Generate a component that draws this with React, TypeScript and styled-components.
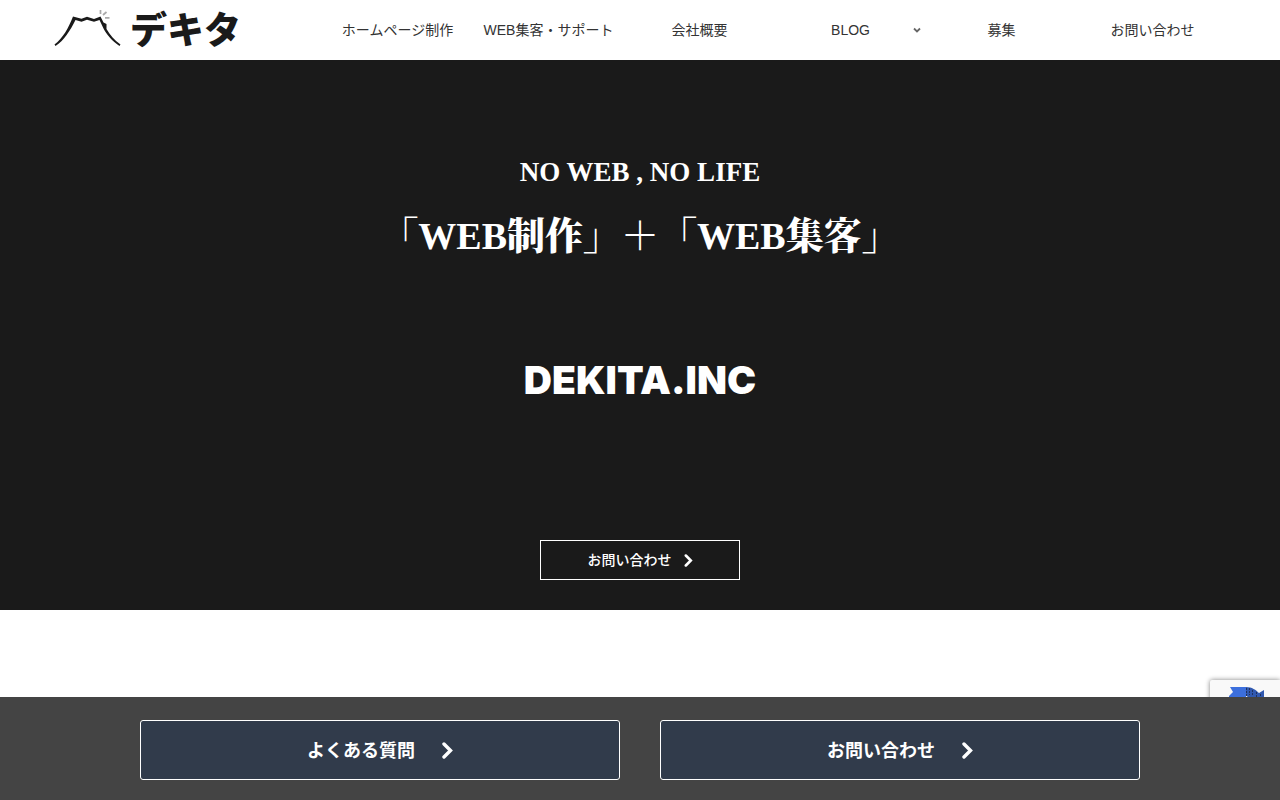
import React from "react";
import styled, { createGlobalStyle } from "styled-components";

const GlobalStyle = createGlobalStyle`
  *, *::before, *::after { box-sizing: border-box; }
  body {
    margin: 0;
    background: #fff;
    color: #333;
    font-family: "Liberation Sans", "Noto Sans CJK JP", sans-serif;
    font-size: 14px;
    line-height: 20px;
  }
  a { color: inherit; text-decoration: none; }
`;

const Page = styled.div`
  min-height: 100vh;
  padding-bottom: 104px;
`;

const Header = styled.header`
  display: grid;
  grid-template-columns: 270px 1fr;
  align-items: center;
  height: 60px;
  padding: 0 52px;
  background: #fff;
`;

const Brand = styled.a`
  display: flex;
  align-items: center;
  gap: 8px;
  color: #1a1a1a;
`;

const BrandName = styled.span`
  padding-bottom: 4px;
  font-family: "Noto Sans CJK JP", sans-serif;
  font-size: 37px;
  font-style: oblique 8deg;
  font-weight: 900;
  line-height: 56px;
`;

const Nav = styled.nav`
  display: grid;
  grid-template-columns: repeat(6, 1fr);
`;

const NavLink = styled.a`
  display: grid;
  grid-template-columns: 1fr auto 1fr;
  align-items: center;
  line-height: 60px;
  white-space: nowrap;

  svg { justify-self: end; margin-right: 5px; }
`;

const NavLabel = styled.span`
  grid-column: 2;
`;

const Hero = styled.section`
  display: flex;
  flex-direction: column;
  align-items: center;
  padding: 92px 20px 30px;
  background: #1a1a1a;
  color: #fff;
  text-align: center;
`;

const Tagline = styled.p`
  margin: 0;
  font: bold 27px/40px "Liberation Serif", serif;
`;

const Title = styled.h1`
  margin: 16px 0 0;
  font: 900 38px/56px "Liberation Serif", "Noto Serif CJK JP", "Noto Sans CJK JP", serif;
`;

const Company = styled.p`
  margin: 84px 0 0;
  font: 900 39px/64px Inter, sans-serif;
`;

const OutlineButton = styled.a`
  display: flex;
  align-items: center;
  justify-content: center;
  gap: 12px;
  width: 200px;
  height: 40px;
  margin-top: 128px;
  border: 1px solid #fff;
  font-family: "Noto Sans CJK JP", sans-serif;
  font-weight: 500;
`;

const ButtonLabel = styled.span`
  padding-bottom: 2px;
`;

const BottomBar = styled.div`
  position: fixed;
  right: 0;
  bottom: 0;
  left: 0;
  z-index: 2;
  padding: 23px 20px 20px;
  background: #444;
`;

const BottomActions = styled.div`
  display: grid;
  grid-template-columns: 1fr 1fr;
  gap: 40px;
  max-width: 1000px;
  margin: 0 auto;
`;

const ActionButton = styled.a`
  display: flex;
  align-items: center;
  justify-content: center;
  gap: 27px;
  height: 60px;
  border: 1px solid #fff;
  border-radius: 3px;
  background: #313b4b;
  color: #fff;
  font-family: "Noto Sans CJK JP", sans-serif;
  font-size: 18px;
  font-weight: 700;
`;

const CaptchaBadge = styled.div`
  position: fixed;
  right: 0;
  bottom: 60px;
  z-index: 1;
  width: 70px;
  height: 60px;
  padding: 7px 0 0 19px;
  border-radius: 2px 0 0 2px;
  background: #f9f9f9;
  box-shadow: 0 0 5px gray;
`;

const Mountain = () => (
  <svg width="70" height="40" viewBox="0 0 70 40" aria-hidden="true">
    <path
      d="M2.500 34.500C11 28 16.500 18 21 6.500L29.500 8.700L35 6.800L42 8.900L48.500 6.500L51.500 12.500L54.500 14V19C58 25 62 30 68.500 34.500L67.500 36C60 31 55 25 51.500 18.500L47.500 10L42 11.800L35 9.800L29.500 11.800L23.500 10C18 21 12 30.500 3.500 36Z"
      fill="#1a1a1a"
    />
    <path
      d="M48.500 -0.500V4M51 5L54.500 2M53 7.800H57.500"
      fill="none"
      stroke="#aaa"
      strokeWidth="1.700"
    />
  </svg>
);

const Chevron = ({ size }: { size: "small" | "large" }) => (
  <svg
    width={size === "large" ? 11 : 9}
    height={size === "large" ? 17 : 13}
    viewBox="0 0 11 17"
    fill="none"
    aria-hidden="true"
  >
    <path d="M2 2L8.500 8.500L2 15" stroke="#fff" strokeWidth="3.400" strokeLinecap="round" />
  </svg>
);

const DownArrow = () => (
  <svg width="8" height="6" viewBox="0 0 8 6" fill="none" aria-hidden="true">
    <path d="M1 1.500L4 4.500L7 1.500" stroke="#666" strokeWidth="1.800" />
  </svg>
);

const CaptchaLogo = () => (
  <svg width="36" height="36" viewBox="0 0 36 36" aria-hidden="true">
    <path d="M1 0H17V14H0V9L4 5Z" fill="#3c6fdd" />
    <path d="M17 0C23 0 27 3 30 6L35 3V14H22L17 8Z" fill="#3159b0" />
    <path d="M17.500 1V9M20.500 1V8M23.500 3V9M27.500 5V11M31.500 7V12" stroke="#20315e" strokeWidth="1" strokeDasharray="2 1" />
  </svg>
);

const links = ["ホームページ制作", "WEB集客・サポート", "会社概要", "BLOG", "募集", "お問い合わせ"];

export default function App() {
  return (
    <>
      <GlobalStyle />
      <Page>
        <Header>
          <Brand href="#">
            <Mountain />
            <BrandName>デキタ</BrandName>
          </Brand>
          <Nav>
            {links.map((label) => (
              <NavLink href="#" key={label}>
                <NavLabel>{label}</NavLabel>
                {label === "BLOG" && <DownArrow />}
              </NavLink>
            ))}
          </Nav>
        </Header>
        <Hero>
          <Tagline>NO WEB , NO LIFE</Tagline>
          <Title>「WEB制作」＋「WEB集客」</Title>
          <Company>DEKITA.INC</Company>
          <OutlineButton href="#">
            <ButtonLabel>お問い合わせ</ButtonLabel>
            <Chevron size="small" />
          </OutlineButton>
        </Hero>
      </Page>
      <CaptchaBadge>
        <CaptchaLogo />
      </CaptchaBadge>
      <BottomBar>
        <BottomActions>
          <ActionButton href="#">
            <ButtonLabel>よくある質問</ButtonLabel>
            <Chevron size="large" />
          </ActionButton>
          <ActionButton href="#">
            <ButtonLabel>お問い合わせ</ButtonLabel>
            <Chevron size="large" />
          </ActionButton>
        </BottomActions>
      </BottomBar>
    </>
  );
}
